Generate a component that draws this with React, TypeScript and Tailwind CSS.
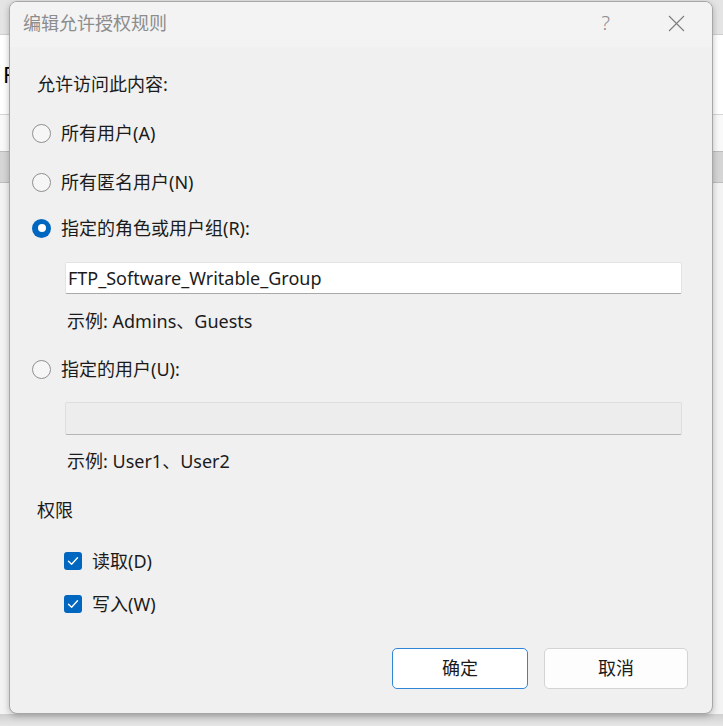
import React from "react";

const font = { fontFamily: '"Noto Sans", "Noto Sans CJK SC", sans-serif' };

function Radio({ checked }: { checked?: boolean }) {
  return checked ? (
    <div className="w-[19px] h-[19px] rounded-full bg-[#0067c0] flex items-center justify-center shrink-0">
      <div className="w-[8px] h-[8px] rounded-full bg-white" />
    </div>
  ) : (
    <div className="w-[19px] h-[19px] rounded-full border border-[#8f8f8f] bg-[#f6f6f6] shrink-0" />
  );
}

function Check() {
  return (
    <div className="w-[18px] h-[18px] rounded-[3px] bg-[#0067c0] flex items-center justify-center shrink-0">
      <svg width="14" height="14" viewBox="0 0 14 14">
        <path d="M2.5 7.3 L5.6 10.2 L11.5 3.8" fill="none" stroke="white" strokeWidth="1.4" strokeLinecap="round" strokeLinejoin="round" />
      </svg>
    </div>
  );
}

export default function App() {
  return (
    <div className="relative w-[723px] h-[726px] overflow-hidden bg-white text-[#1b1b1b]" style={font}>
      {/* background window */}
      <div className="flex flex-col w-full h-full">
        <div className="h-[35px] bg-[#e4e4e4] border-b border-[#cfcfcf]" />
        <div className="h-[80px] bg-white border-b border-[#d6d6d6] flex items-center pl-[3px] text-[22px] text-black">F</div>
        <div className="h-[36px] bg-[#f9f9f9]" />
        <div className="h-[32px] bg-[#d5d5d5] border-y border-[#bdbdbd]" />
        <div className="flex-1 bg-[#f3f3f3]" />
        <div className="h-[12px] bg-gradient-to-b from-[#cfcfcf] to-[#e6e6e6]" />
      </div>

      {/* dialog */}
      <div className="absolute left-[9px] top-[1px] w-[704px] h-[713px] rounded-[8px] border border-[#a7a7a7] bg-[#f0f0f0] shadow-[0_2px_6px_rgba(0,0,0,0.25)] flex flex-col overflow-hidden">
        <div className="h-[45px] shrink-0 bg-[#f3f3f3] flex items-center pl-[13px] pr-[27px] pb-[3px]">
          <span className="text-[18px] text-[#8c8c8c] leading-none">编辑允许授权规则</span>
          <span className="ml-auto text-[20px] text-[#8c8c8c] font-light leading-none mr-[58px]">?</span>
          <svg width="17" height="17" viewBox="0 0 17 17">
            <path d="M1 1 L16 16 M16 1 L1 16" stroke="#7d7d7d" strokeWidth="1.1" />
          </svg>
        </div>

        <div className="flex flex-col pl-[22px] pr-[30px]">
          <div className="mt-[25px] h-[24px] flex items-center pl-[5px] text-[18px]">允许访问此内容:</div>

          <div className="mt-[25px] h-[24px] flex items-center gap-[10px] text-[18px]">
            <Radio />
            <span>所有用户(A)</span>
          </div>
          <div className="mt-[25px] h-[24px] flex items-center gap-[10px] text-[18px]">
            <Radio />
            <span>所有匿名用户(N)</span>
          </div>
          <div className="mt-[22px] h-[24px] flex items-center gap-[10px] text-[18px]">
            <Radio checked />
            <span>指定的角色或用户组(R):</span>
          </div>

          <div className="mt-[22px] ml-[33px] h-[32px] bg-white border border-[#e3e3e3] border-b-[#a9a9a9] rounded-[2px] flex items-center pl-[2px] text-[18px]">
            FTP_Software_Writable_Group
          </div>
          <div className="mt-[15px] h-[24px] ml-[35px] flex items-center text-[18px]">示例: Admins、Guests</div>

          <div className="mt-[24px] h-[24px] flex items-center gap-[10px] text-[18px]">
            <Radio />
            <span>指定的用户(U):</span>
          </div>
          <div className="mt-[21px] ml-[33px] h-[33px] bg-[#ededed] border border-[#dedede] border-b-[#b5b5b5] rounded-[2px]" />
          <div className="mt-[14px] h-[24px] ml-[35px] flex items-center text-[18px]">示例: User1、User2</div>

          <div className="mt-[25px] h-[24px] ml-[5px] flex items-center text-[18px]">权限</div>

          <div className="mt-[27px] h-[24px] ml-[32px] flex items-center gap-[10px] text-[18px]">
            <Check />
            <span>读取(D)</span>
          </div>
          <div className="mt-[19px] h-[24px] ml-[32px] flex items-center gap-[10px] text-[18px]">
            <Check />
            <span>写入(W)</span>
          </div>

          <div className="mt-[32px] flex justify-end gap-[16px]">
            <button className="w-[136px] h-[41px] rounded-[5px] bg-white border-[1.5px] border-[#2f86d6] text-[18px] flex items-center justify-center">确定</button>
            <button className="w-[144px] h-[41px] rounded-[5px] bg-[#fdfdfd] border border-[#d3d3d3] text-[18px] flex items-center justify-center mr-[-6px]">取消</button>
          </div>
        </div>
      </div>
    </div>
  );
}
